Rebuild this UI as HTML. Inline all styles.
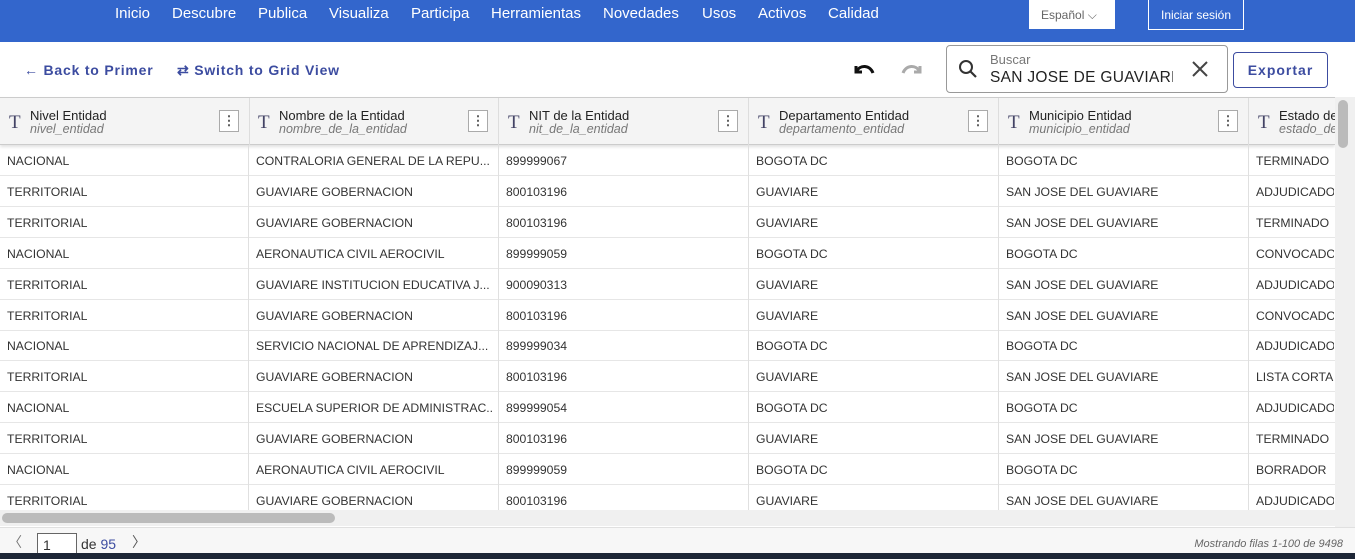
<!DOCTYPE html><html><head><meta charset="utf-8"><style>
*{box-sizing:border-box;margin:0;padding:0}
body{width:1355px;height:559px;overflow:hidden;font-family:"Liberation Sans",sans-serif;background:#fff;position:relative}
.nav{position:absolute;left:0;top:0;width:1355px;height:42px;background:#3366cc}
.nav span{position:absolute;top:5px;color:#fff;font-size:15px}
.lang{position:absolute;left:1029px;top:0;width:86px;height:29px;background:#fff;color:#666;font-size:12px;padding:8px 0 0 12px}
.login{position:absolute;left:1148px;top:0;width:96px;height:30px;border:1px solid #fff;border-top:none;color:#fff;font-size:12px;text-align:center;padding-top:8px}
.tb{position:absolute;top:62px;color:#3c4ca0;font-size:14px;font-weight:bold;letter-spacing:.8px;white-space:nowrap}
.search{position:absolute;left:946px;top:45px;width:282px;height:48px;border:1px solid #999;border-radius:4px}
.exp{position:absolute;left:1233px;top:52px;width:95px;height:36px;border:1px solid #3c4ca0;border-radius:4px;color:#3c4ca0;font-weight:bold;font-size:14px;letter-spacing:1px;text-align:center;padding-top:9px}
.hdr{position:absolute;left:0;top:97px;width:1335px;height:48px;background:#f4f4f4;border-top:1px solid #ccc;border-bottom:1px solid #ccc;box-shadow:0 2px 3px rgba(0,0,0,.12)}
.hc{position:absolute;top:0;height:47px;border-right:1px solid #ddd;width:250px}
.hc .t{position:absolute;left:9px;top:14px;font-family:"Liberation Serif",serif;font-size:19px;color:#446}
.hc .n{position:absolute;left:30px;top:10px;font-size:13px;color:#222;white-space:nowrap}
.hc .f{position:absolute;left:30px;top:24px;font-size:12.5px;color:#777;font-style:italic;white-space:nowrap}
.hc .m{position:absolute;right:10px;top:12px;width:20px;height:22px;border:1px solid #aaa;background:#fff;color:#555;font-size:13px;text-align:center;line-height:20px;font-weight:bold}
.row{position:absolute;left:0;width:1335px;height:31px;border-bottom:1px solid #e6e6e6;font-size:12.2px;color:#333}
.row span{position:absolute;top:9px;white-space:nowrap;overflow:hidden}
.vl{position:absolute;top:145px;width:1px;height:365px;background:#e0e0e0}
</style></head><body>
<div class="nav">
<span style="left:115px">Inicio</span><span style="left:172px">Descubre</span><span style="left:258px">Publica</span><span style="left:329px">Visualiza</span><span style="left:411px">Participa</span><span style="left:491px">Herramientas</span><span style="left:603px">Novedades</span><span style="left:702px">Usos</span><span style="left:758px">Activos</span><span style="left:828px">Calidad</span>
<div class="lang">Español ⌵</div><div class="login">Iniciar sesión</div></div>
<div class="tb" style="left:24px">← Back to Primer</div>
<div class="tb" style="left:177px">⇄ Switch to Grid View</div>
<svg style="position:absolute;left:852px;top:60px" width="24" height="20" viewBox="0 0 24 20"><path d="M4 6 v6 h6 M4 12 C8 4 18 5 21 13" fill="none" stroke="#111" stroke-width="3"/></svg>
<svg style="position:absolute;left:900px;top:60px" width="24" height="20" viewBox="0 0 24 20"><path d="M20 6 v6 h-6 M20 12 C16 4 6 5 3 13" fill="none" stroke="#aaa" stroke-width="3"/></svg>
<div class="search">
<svg style="position:absolute;left:10px;top:12px" width="22" height="22" viewBox="0 0 22 22"><circle cx="9" cy="9" r="6" fill="none" stroke="#333" stroke-width="2"/><path d="M13.5 13.5 L19 19" stroke="#333" stroke-width="2.2"/></svg>
<div style="position:absolute;left:43px;top:6px;font-size:13px;color:#777">Buscar</div>
<div style="position:absolute;left:43px;top:23px;font-size:15.5px;color:#222;letter-spacing:.3px;width:183px;overflow:hidden;white-space:nowrap">SAN JOSE DE GUAVIARE</div>
<svg style="position:absolute;left:244px;top:14px" width="18" height="18"><path d="M2 2 L16 16 M16 2 L2 16" stroke="#444" stroke-width="2"/></svg></div>
<div class="exp">Exportar</div>
<div class="hdr">
<div class="hc" style="left:0"><span class="t">T</span><span class="n">Nivel Entidad</span><span class="f">nivel_entidad</span><span class="m">⋮</span></div>
<div class="hc" style="left:249px"><span class="t">T</span><span class="n">Nombre de la Entidad</span><span class="f">nombre_de_la_entidad</span><span class="m">⋮</span></div>
<div class="hc" style="left:499px"><span class="t">T</span><span class="n">NIT de la Entidad</span><span class="f">nit_de_la_entidad</span><span class="m">⋮</span></div>
<div class="hc" style="left:749px"><span class="t">T</span><span class="n">Departamento Entidad</span><span class="f">departamento_entidad</span><span class="m">⋮</span></div>
<div class="hc" style="left:999px"><span class="t">T</span><span class="n">Municipio Entidad</span><span class="f">municipio_entidad</span><span class="m">⋮</span></div>
<div class="hc" style="left:1249px;width:86px;border:none;overflow:hidden"><span class="t">T</span><span class="n">Estado del</span><span class="f">estado_del</span></div>
</div>
<div id="rows"></div>
<div class="vl" style="left:248px"></div><div class="vl" style="left:498px"></div><div class="vl" style="left:748px"></div><div class="vl" style="left:998px"></div><div class="vl" style="left:1248px"></div>
<div style="position:absolute;left:0;top:510px;width:1335px;height:16px;background:#f0f0f0"><div style="position:absolute;left:2px;top:3px;width:333px;height:10px;border-radius:5px;background:#bbb"></div></div>
<div style="position:absolute;left:1335px;top:97px;width:20px;height:430px;background:#f0f0f0"><div style="position:absolute;left:3px;top:3px;width:10px;height:48px;border-radius:5px;background:#bbb"></div></div>
<div style="position:absolute;left:0;top:527px;width:1355px;height:26px;background:#f7f7f7;border-top:1px solid #e0e0e0;font-size:14px;color:#333">
<span style="position:absolute;left:8px;top:4px;color:#777">〈</span>
<div style="position:absolute;left:37px;top:5px;width:40px;height:22px;border:1px solid #666;background:#fff;padding:3px 0 0 5px">1</div>
<span style="position:absolute;left:81px;top:8px">de <span style="color:#3c4ca0">95</span></span>
<span style="position:absolute;left:132px;top:4px;color:#555">〉</span>
<span style="position:absolute;right:12px;top:10px;font-size:11px;font-style:italic;color:#666">Mostrando filas 1-100 de 9498</span></div>
<div style="position:absolute;left:0;top:553px;width:1355px;height:6px;background:#1d2636"></div>
<script>
var d=[["NACIONAL","CONTRALORIA GENERAL DE LA REPU...","899999067","BOGOTA DC","BOGOTA DC","TERMINADO"],
["TERRITORIAL","GUAVIARE GOBERNACION","800103196","GUAVIARE","SAN JOSE DEL GUAVIARE","ADJUDICADO"],
["TERRITORIAL","GUAVIARE GOBERNACION","800103196","GUAVIARE","SAN JOSE DEL GUAVIARE","TERMINADO"],
["NACIONAL","AERONAUTICA CIVIL AEROCIVIL","899999059","BOGOTA DC","BOGOTA DC","CONVOCADO"],
["TERRITORIAL","GUAVIARE INSTITUCION EDUCATIVA J...","900090313","GUAVIARE","SAN JOSE DEL GUAVIARE","ADJUDICADO"],
["TERRITORIAL","GUAVIARE GOBERNACION","800103196","GUAVIARE","SAN JOSE DEL GUAVIARE","CONVOCADO"],
["NACIONAL","SERVICIO NACIONAL DE APRENDIZAJ...","899999034","BOGOTA DC","BOGOTA DC","ADJUDICADO"],
["TERRITORIAL","GUAVIARE GOBERNACION","800103196","GUAVIARE","SAN JOSE DEL GUAVIARE","LISTA CORTA"],
["NACIONAL","ESCUELA SUPERIOR DE ADMINISTRAC...","899999054","BOGOTA DC","BOGOTA DC","ADJUDICADO"],
["TERRITORIAL","GUAVIARE GOBERNACION","800103196","GUAVIARE","SAN JOSE DEL GUAVIARE","TERMINADO"],
["NACIONAL","AERONAUTICA CIVIL AEROCIVIL","899999059","BOGOTA DC","BOGOTA DC","BORRADOR"],
["TERRITORIAL","GUAVIARE GOBERNACION","800103196","GUAVIARE","SAN JOSE DEL GUAVIARE","ADJUDICADO"]];
var h="";d.forEach(function(r,i){h+='<div class="row" style="top:'+(145+i*30.9)+'px">';r.forEach(function(c,j){h+='<span style="left:'+(7+j*250-(j>0?1:0))+'px;width:'+(j==5?78:236)+'px">'+c+'</span>'});h+='</div>'});
document.getElementById("rows").innerHTML=h;
</script>
</body></html>
